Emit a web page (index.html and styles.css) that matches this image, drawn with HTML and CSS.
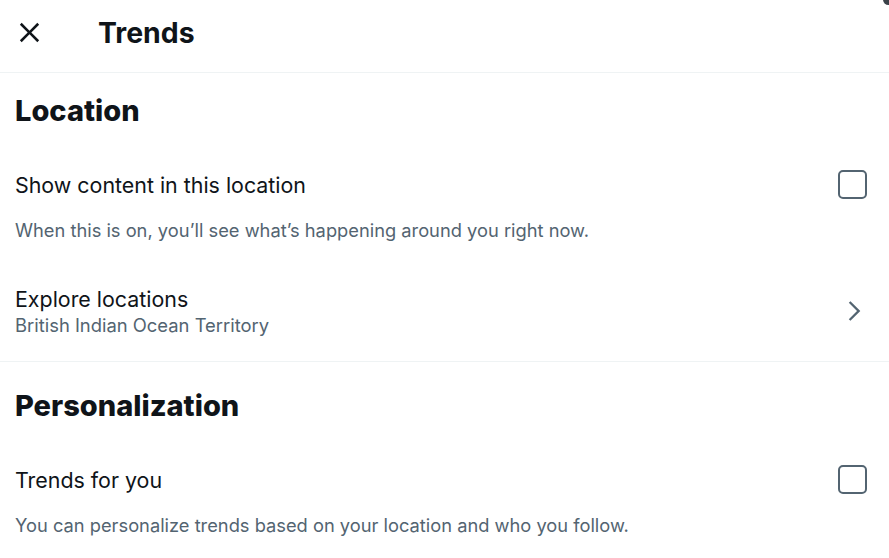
FILE: index.html
```html
<!DOCTYPE html>
<html>
<head>
<meta charset="utf-8">
<link rel="stylesheet" href="styles.css">
</head>
<body>
<div class="page">
  <span class="corner"></span>
  <header class="header">
    <svg class="close" viewBox="0 0 24 24" width="31" height="31"><path d="M10.59 12L4.54 5.96l1.42-1.42L12 10.59l6.04-6.05 1.42 1.42L13.41 12l6.05 6.04-1.42 1.42L12 13.41l-6.04 6.05-1.42-1.42L10.59 12z" fill="#0f1419"/></svg>
    <h1 class="title">Trends</h1>
  </header>
  <section class="section">
    <h2 class="heading">Location</h2>
    <div class="row">
      <div class="label">Show content in this location</div>
      <div class="checkbox"></div>
    </div>
    <div class="desc">When this is on, you’ll see what’s happening around you right now.</div>
    <div class="row link">
      <div>
        <div class="label">Explore locations</div>
        <div class="sub">British Indian Ocean Territory</div>
      </div>
      <svg class="chev" viewBox="0 0 24 24" width="28" height="28"><path d="M14.586 12L7.543 4.96l1.414-1.42L17.414 12l-8.457 8.46-1.414-1.42L14.586 12z" fill="#536471"/></svg>
    </div>
  </section>
  <section class="section">
    <h2 class="heading second">Personalization</h2>
    <div class="row">
      <div class="label">Trends for you</div>
      <div class="checkbox"></div>
    </div>
    <div class="desc">You can personalize trends based on your location and who you follow.</div>
  </section>
</div>
</body>
</html>
```
FILE: styles.css
```css
html, body { margin: 0; padding: 0; background: #fff; }
body { font-family: Inter, "Noto Sans", sans-serif; color: #0f1419; }
.page { width: 889px; position: relative; }
.corner { position: absolute; right: -5px; top: -6px; width: 11px; height: 11px; border-radius: 50%; background: #3a4249; }
.header { height: 73px; display: flex; align-items: center; border-bottom: 1px solid #eff3f4; padding: 0 0 7px 14px; box-sizing: border-box; }
.close { display: block; flex: none; }
.title { margin: 0 0 0 53px; font-size: 28.4px; line-height: 34px; font-weight: 700; }
.section { border-bottom: 1px solid #eff3f4; }
.section:last-child { border-bottom: none; }
.heading { margin: 0; padding: 20px 15px 20px; font-size: 29px; font-weight: 800; line-height: 36px; }
.heading.second { padding-top: 26px; }
.row { display: flex; align-items: center; justify-content: space-between; padding: 21px 22px 19px 15px; }
.label { font-size: 21.4px; line-height: 28px; }
.checkbox { width: 29px; height: 29px; box-sizing: border-box; border: 2.5px solid #536471; border-radius: 5px; }
.desc { padding: 0 15px 21px; font-size: 18.3px; line-height: 24px; color: #536471; }
.sub { font-size: 18.4px; line-height: 24px; color: #536471; }
.link { padding: 22px 22px 24px 15px; }
.chev { display: block; flex: none; margin-right: -1px; }
```
